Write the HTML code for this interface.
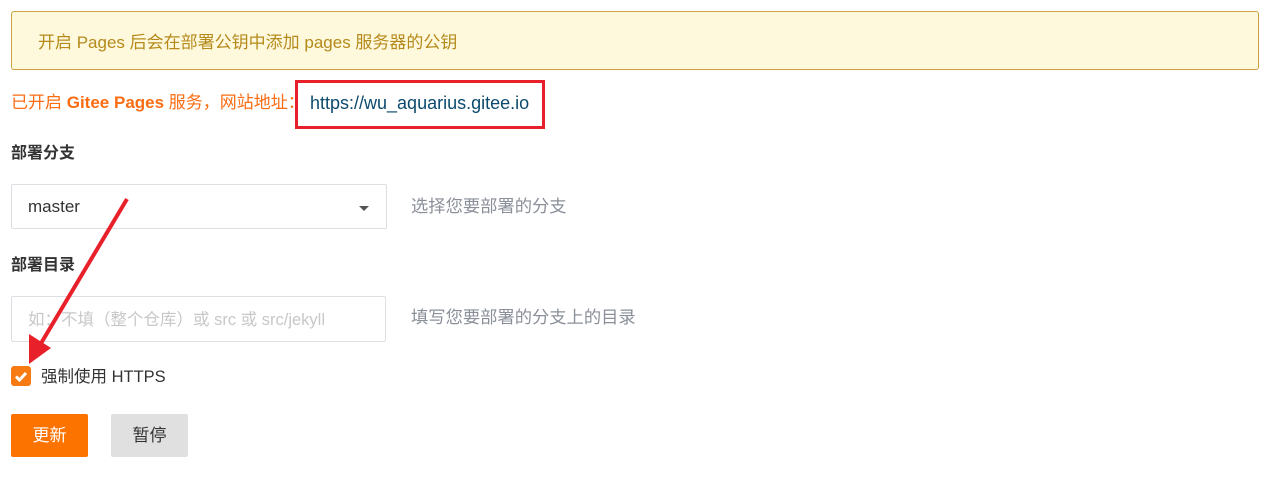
<!DOCTYPE html>
<html><head><meta charset="utf-8"><style>
body{margin:0;width:1287px;height:481px;background:#fff;font-family:"Liberation Sans","Noto Sans CJK SC",sans-serif;position:relative;overflow:hidden}
.a{position:absolute;white-space:nowrap}
</style></head><body>
<div class="a" style="left:11px;top:11px;width:1246px;height:57px;background:#fef8dc;border:1px solid #caa33f;border-radius:3px"></div>
<div class="a" style="left:38px;top:32px;font-size:17px;color:#b58a1b;line-height:22px">开启 Pages 后会在部署公钥中添加 pages 服务器的公钥</div>
<div class="a" style="left:11px;top:92px;font-size:17px;color:#fb6d13;line-height:22px">已开启 <b>Gitee Pages</b> 服务，网站地址：</div>
<div class="a" style="left:295px;top:80px;border:3px solid #e8202a;width:244px;height:43px"></div>
<div class="a" style="left:310px;top:92px;font-size:18px;color:#0c4a6e;line-height:22px">https://wu_aquarius.gitee.io</div>
<div class="a" style="left:11px;top:143px;font-size:16px;font-weight:bold;color:#333;line-height:22px">部署分支</div>
<div class="a" style="left:11px;top:184px;width:374px;height:43px;border:1px solid #dcdfe4;border-radius:2px"></div>
<div class="a" style="left:28px;top:196px;font-size:17px;color:#333;line-height:22px">master</div>
<div class="a" style="left:359px;top:206px;width:0;height:0;border-left:5px solid transparent;border-right:5px solid transparent;border-top:5px solid #555"></div>
<div class="a" style="left:411px;top:195px;font-size:17.3px;color:#8a8f99;line-height:22px">选择您要部署的分支</div>
<div class="a" style="left:11px;top:255px;font-size:16px;font-weight:bold;color:#333;line-height:22px">部署目录</div>
<div class="a" style="left:11px;top:296px;width:373px;height:44px;border:1px solid #dcdfe4;border-radius:2px"></div>
<div class="a" style="left:28px;top:309px;font-size:16.5px;color:#c8c8c8;line-height:22px">如：不填（整个仓库）或 src 或 src/jekyll</div>
<div class="a" style="left:411px;top:306px;font-size:17.3px;color:#8a8f99;line-height:22px">填写您要部署的分支上的目录</div>
<div class="a" style="left:11px;top:366px;width:20px;height:20px;background:#f87a12;border-radius:3px"></div>
<svg class="a" style="left:11px;top:366px" width="20" height="20"><path d="M5 10.5 L8.5 14 L15 7" stroke="#fff" stroke-width="3" fill="none"/></svg>
<div class="a" style="left:41px;top:366px;font-size:16.5px;color:#333;line-height:22px">强制使用 HTTPS</div>
<div class="a" style="left:11px;top:414px;width:77px;height:43px;background:#fc7300;border-radius:2px;color:#fff;font-size:17px;line-height:43px;text-align:center">更新</div>
<div class="a" style="left:111px;top:414px;width:77px;height:43px;background:#e0e0e0;border-radius:2px;color:#333;font-size:17px;line-height:43px;text-align:center">暂停</div>
<svg class="a" style="left:0;top:0" width="200" height="400"><line x1="127" y1="199" x2="40" y2="345" stroke="#e8202a" stroke-width="4"/><polygon points="29,364 29,334 51,348" fill="#e8202a"/></svg>
</body></html>
